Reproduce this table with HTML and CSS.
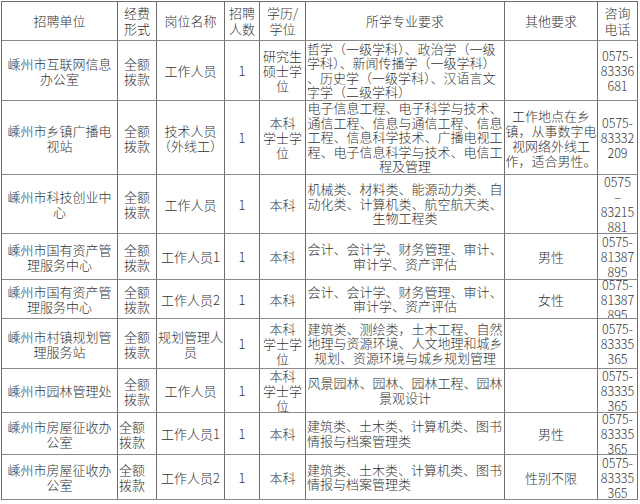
FILE: index.html
```html
<!DOCTYPE html>
<html lang="zh">
<head>
<meta charset="utf-8">
<link rel="stylesheet" href="styles.css">
</head>
<body>
<div class="table">
  <div class="c h"><span>招聘单位</span></div>
  <div class="c h"><span>经费<br>形式</span></div>
  <div class="c h"><span>岗位名称</span></div>
  <div class="c h"><span>招聘<br>人数</span></div>
  <div class="c h"><span>学历/<br>学位</span></div>
  <div class="c h"><span>所学专业要求</span></div>
  <div class="c h"><span>其他要求</span></div>
  <div class="c h"><span>咨询<br>电话</span></div>

  <div class="c"><span>嵊州市互联网信息<br>办公室</span></div>
  <div class="c"><span>全额<br>拨款</span></div>
  <div class="c"><span>工作人员</span></div>
  <div class="c"><span>1</span></div>
  <div class="c"><span>研究生<br>硕士学<br>位</span></div>
  <div class="c m left"><span>哲学（一级学科）、政治学（一级<br>学科）、新闻传播学（一级学科）<br>、历史学（一级学科）、汉语言文<br>字学（二级学科）</span></div>
  <div class="c"></div>
  <div class="c p"><span>0575-<br>83336<br>681</span></div>

  <div class="c"><span>嵊州市乡镇广播电<br>视站</span></div>
  <div class="c"><span>全额<br>拨款</span></div>
  <div class="c"><span>技术人员<br>（外线工）</span></div>
  <div class="c"><span>1</span></div>
  <div class="c"><span>本科<br>学士学<br>位</span></div>
  <div class="c m"><span>电子信息工程、电子科学与技术、<br>通信工程、信息与通信工程、信息<br>工程、信息科学技术、广播电视工<br>程、电子信息科学与技术、电信工<br>程及管理</span></div>
  <div class="c"><span>工作地点在乡<br>镇，从事数字电<br>视网络外线工<br>作，适合男性。</span></div>
  <div class="c p"><span>0575-<br>83332<br>209</span></div>

  <div class="c"><span>嵊州市科技创业中<br>心</span></div>
  <div class="c"><span>全额<br>拨款</span></div>
  <div class="c"><span>工作人员</span></div>
  <div class="c"><span>1</span></div>
  <div class="c"><span>本科</span></div>
  <div class="c m"><span>机械类、材料类、能源动力类、自<br>动化类、计算机类、航空航天类、<br>生物工程类</span></div>
  <div class="c"></div>
  <div class="c p"><span>0575<br>–<br>83215<br>881</span></div>

  <div class="c"><span>嵊州市国有资产管<br>理服务中心</span></div>
  <div class="c"><span>全额<br>拨款</span></div>
  <div class="c"><span>工作人员1</span></div>
  <div class="c"><span>1</span></div>
  <div class="c"><span>本科</span></div>
  <div class="c m"><span>会计、会计学、财务管理、审计、<br>审计学、资产评估</span></div>
  <div class="c"><span>男性</span></div>
  <div class="c p"><span>0575-<br>81387<br>895</span></div>

  <div class="c"><span>嵊州市国有资产管<br>理服务中心</span></div>
  <div class="c"><span>全额<br>拨款</span></div>
  <div class="c"><span>工作人员2</span></div>
  <div class="c"><span>1</span></div>
  <div class="c"><span>本科</span></div>
  <div class="c m"><span>会计、会计学、财务管理、审计、<br>审计学、资产评估</span></div>
  <div class="c"><span>女性</span></div>
  <div class="c p"><span>0575-<br>81387<br>895</span></div>

  <div class="c"><span>嵊州市村镇规划管<br>理服务站</span></div>
  <div class="c"><span>全额<br>拨款</span></div>
  <div class="c"><span>规划管理人<br>员</span></div>
  <div class="c"><span>1</span></div>
  <div class="c"><span>本科<br>学士学<br>位</span></div>
  <div class="c m"><span>建筑类、测绘类，土木工程、自然<br>地理与资源环境、人文地理和城乡<br>规划、资源环境与城乡规划管理</span></div>
  <div class="c"></div>
  <div class="c p"><span>0575-<br>83335<br>365</span></div>

  <div class="c"><span>嵊州市园林管理处</span></div>
  <div class="c"><span>全额<br>拨款</span></div>
  <div class="c"><span>工作人员</span></div>
  <div class="c"><span>1</span></div>
  <div class="c"><span>本科<br>学士学<br>位</span></div>
  <div class="c m"><span>风景园林、园林、园林工程、园林<br>景观设计</span></div>
  <div class="c"></div>
  <div class="c p"><span>0575-<br>83335<br>365</span></div>

  <div class="c"><span>嵊州市房屋征收办<br>公室</span></div>
  <div class="c left"><span>全额<br>拨款</span></div>
  <div class="c"><span>工作人员1</span></div>
  <div class="c"><span>1</span></div>
  <div class="c"><span>本科</span></div>
  <div class="c m left"><span>建筑类、土木类、计算机类、图书<br>情报与档案管理类</span></div>
  <div class="c"><span>男性</span></div>
  <div class="c p"><span>0575-<br>83335<br>365</span></div>

  <div class="c"><span>嵊州市房屋征收办<br>公室</span></div>
  <div class="c left"><span>全额<br>拨款</span></div>
  <div class="c"><span>工作人员2</span></div>
  <div class="c"><span>1</span></div>
  <div class="c"><span>本科</span></div>
  <div class="c m left"><span>建筑类、土木类、计算机类、图书<br>情报与档案管理类</span></div>
  <div class="c"><span>性别不限</span></div>
  <div class="c p"><span>0575-<br>83335<br>365</span></div>
</div>
</body>
</html>
```

FILE: styles.css
```css
html, body {
  margin: 0;
  padding: 0;
  background: #ffffff;
}
body {
  font-family: "Noto Sans CJK SC", "DejaVu Sans", sans-serif;
  font-size: 13px;
  font-weight: 300;
  color: #333333;
}
.table {
  display: grid;
  grid-template-columns: 116px 39px 68px 35px 46px 199px 93px 40px;
  grid-template-rows: 39px 60px 74px 59px 46px 39px 50px 44px 42px 45px;
  margin: 1px 0 0 1px;
  width: max-content;
  border-left: 1px solid #6e6e6e;
  border-top: 1px solid #6e6e6e;
}
.c {
  box-sizing: border-box;
  border-right: 1px solid #6e6e6e;
  border-bottom: 1px solid #8a8a8a;
  display: flex;
  align-items: center;
  justify-content: center;
  text-align: center;
  overflow: hidden;
  white-space: nowrap;
  line-height: 15px;
}
.c span {
  display: block;
}
.h {
  line-height: 16px;
}
.m {
  line-height: 14.5px;
}
.left {
  justify-content: flex-start;
  text-align: left;
  padding-left: 1px;
}
.p {
  font-size: 12.5px;
}
```
